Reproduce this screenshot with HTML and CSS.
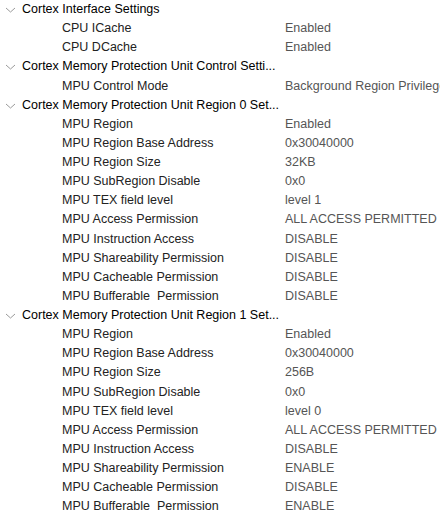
FILE: index.html
```html
<!DOCTYPE html>
<html>
<head>
<meta charset="utf-8">
<link rel="stylesheet" href="styles.css">
</head>
<body>
<div class="tree">
  <div class="row group"><svg class="chev" viewBox="0 0 11 6" width="11" height="6"><path d="M1 1 L5.5 5 L10 1" fill="none" stroke="#9a9a9a" stroke-width="1"/></svg><span class="gname">Cortex Interface Settings</span></div>
  <div class="row"><span class="name">CPU ICache</span><span class="val">Enabled</span></div>
  <div class="row"><span class="name">CPU DCache</span><span class="val">Enabled</span></div>
  <div class="row group"><svg class="chev" viewBox="0 0 11 6" width="11" height="6"><path d="M1 1 L5.5 5 L10 1" fill="none" stroke="#9a9a9a" stroke-width="1"/></svg><span class="gname">Cortex Memory Protection Unit Control Setti...</span></div>
  <div class="row"><span class="name">MPU Control Mode</span><span class="val">Background Region Privileges access only + MPU Disabled during hard fault</span></div>
  <div class="row group"><svg class="chev" viewBox="0 0 11 6" width="11" height="6"><path d="M1 1 L5.5 5 L10 1" fill="none" stroke="#9a9a9a" stroke-width="1"/></svg><span class="gname">Cortex Memory Protection Unit Region 0 Set...</span></div>
  <div class="row"><span class="name">MPU Region</span><span class="val">Enabled</span></div>
  <div class="row"><span class="name">MPU Region Base Address</span><span class="val">0x30040000</span></div>
  <div class="row"><span class="name">MPU Region Size</span><span class="val">32KB</span></div>
  <div class="row"><span class="name">MPU SubRegion Disable</span><span class="val">0x0</span></div>
  <div class="row"><span class="name">MPU TEX field level</span><span class="val">level 1</span></div>
  <div class="row"><span class="name">MPU Access Permission</span><span class="val">ALL ACCESS PERMITTED</span></div>
  <div class="row"><span class="name">MPU Instruction Access</span><span class="val">DISABLE</span></div>
  <div class="row"><span class="name">MPU Shareability Permission</span><span class="val">DISABLE</span></div>
  <div class="row"><span class="name">MPU Cacheable Permission</span><span class="val">DISABLE</span></div>
  <div class="row"><span class="name">MPU Bufferable&nbsp; Permission</span><span class="val">DISABLE</span></div>
  <div class="row group"><svg class="chev" viewBox="0 0 11 6" width="11" height="6"><path d="M1 1 L5.5 5 L10 1" fill="none" stroke="#9a9a9a" stroke-width="1"/></svg><span class="gname">Cortex Memory Protection Unit Region 1 Set...</span></div>
  <div class="row"><span class="name">MPU Region</span><span class="val">Enabled</span></div>
  <div class="row"><span class="name">MPU Region Base Address</span><span class="val">0x30040000</span></div>
  <div class="row"><span class="name">MPU Region Size</span><span class="val">256B</span></div>
  <div class="row"><span class="name">MPU SubRegion Disable</span><span class="val">0x0</span></div>
  <div class="row"><span class="name">MPU TEX field level</span><span class="val">level 0</span></div>
  <div class="row"><span class="name">MPU Access Permission</span><span class="val">ALL ACCESS PERMITTED</span></div>
  <div class="row"><span class="name">MPU Instruction Access</span><span class="val">DISABLE</span></div>
  <div class="row"><span class="name">MPU Shareability Permission</span><span class="val">ENABLE</span></div>
  <div class="row"><span class="name">MPU Cacheable Permission</span><span class="val">DISABLE</span></div>
  <div class="row"><span class="name">MPU Bufferable&nbsp; Permission</span><span class="val">ENABLE</span></div>
</div>
</body>
</html>
```
FILE: styles.css
```css
html, body {
  margin: 0;
  padding: 0;
  background: #ffffff;
  overflow: hidden;
}
.tree {
  font-family: "Liberation Sans", Arial, sans-serif;
  font-size: 12.5px;
  margin-top: -0.5px;
}
.row {
  height: 19.125px;
  display: flex;
  align-items: center;
  white-space: nowrap;
  overflow: hidden;
  width: 440px;
}
.chev {
  flex: none;
  margin-left: 5px;
  margin-right: 6px;
  position: relative;
  top: 1px;
}
.gname {
  color: #000000;
}
.name {
  flex: none;
  width: 223px;
  margin-left: 62px;
  color: #222222;
}
.val {
  flex: none;
  color: #555555;
}
```
